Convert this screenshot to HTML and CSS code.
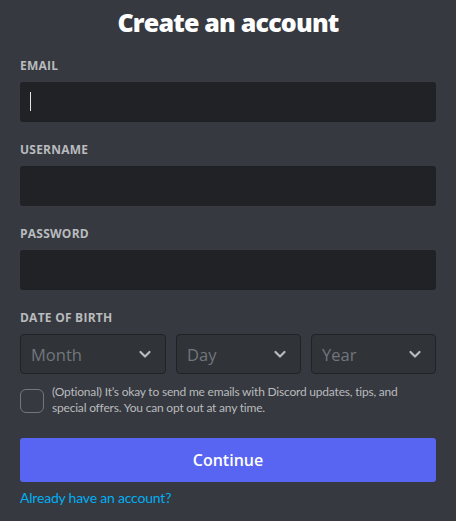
FILE: index.html
```html
<!DOCTYPE html>
<html lang="en">
<head>
<meta charset="utf-8">
<title>Create an account</title>
<link rel="stylesheet" href="styles.css">
</head>
<body>
<main class="auth">
  <h1 class="title">Create an account</h1>
  <form class="form">
    <div class="field">
      <label class="label" for="email">Email</label>
      <div class="input-wrap">
        <input class="input" id="email" type="email">
        <span class="caret"></span>
      </div>
    </div>
    <div class="field">
      <label class="label" for="username">Username</label>
      <div class="input-wrap"><input class="input" id="username" type="text"></div>
    </div>
    <div class="field">
      <label class="label" for="password">Password</label>
      <div class="input-wrap"><input class="input" id="password" type="password"></div>
    </div>
    <div class="field">
      <div class="label">Date of Birth</div>
      <div class="dob">
        <div class="select select-month"><span class="placeholder">Month</span>
          <svg class="chev" width="24" height="24" viewBox="0 0 24 24"><path d="M7.5 10 L12 14.5 L16.5 10" fill="none" stroke="currentColor" stroke-width="2.2" stroke-linecap="round" stroke-linejoin="round"/></svg>
        </div>
        <div class="select select-day"><span class="placeholder">Day</span>
          <svg class="chev" width="24" height="24" viewBox="0 0 24 24"><path d="M7.5 10 L12 14.5 L16.5 10" fill="none" stroke="currentColor" stroke-width="2.2" stroke-linecap="round" stroke-linejoin="round"/></svg>
        </div>
        <div class="select select-year"><span class="placeholder">Year</span>
          <svg class="chev" width="24" height="24" viewBox="0 0 24 24"><path d="M7.5 10 L12 14.5 L16.5 10" fill="none" stroke="currentColor" stroke-width="2.2" stroke-linecap="round" stroke-linejoin="round"/></svg>
        </div>
      </div>
    </div>
    <div class="check-row">
      <span class="checkbox"></span>
      <p class="check-text">(Optional) It’s okay to send me emails with Discord updates, tips, and special offers. You can opt out at any time.</p>
    </div>
    <button type="button" class="btn">Continue</button>
    <a class="link" href="#">Already have an account?</a>
  </form>
</main>
</body>
</html>
```
FILE: styles.css
```css
* { box-sizing: border-box; }
html, body {
  margin: 0;
  padding: 0;
  background: #36393f;
}
body {
  font-family: "Open Sans", "Noto Sans", sans-serif;
  color: #dcddde;
  width: 456px;
  height: 521px;
  overflow: hidden;
}
.auth {
  padding: 5px 20px 0;
}
.title {
  margin: 0 0 19px;
  font-size: 25px;
  line-height: 34px;
  font-weight: 800;
  color: #ffffff;
  text-align: center;
  letter-spacing: -0.8px;
}
.form {
  display: flex;
  flex-direction: column;
}
.field {
  margin-bottom: 20px;
}
.label {
  display: block;
  font-size: 12px;
  line-height: 16px;
  font-weight: 700;
  text-transform: uppercase;
  color: #b9bbbe;
  letter-spacing: 0.02em;
  margin-bottom: 8px;
}
.input-wrap {
  position: relative;
}
.input {
  display: block;
  width: 100%;
  height: 40px;
  border: none;
  border-radius: 3px;
  background: #202225;
  padding: 10px;
  font: inherit;
  color: #dcddde;
  outline: none;
}
.caret {
  position: absolute;
  left: 10px;
  top: 10px;
  width: 1px;
  height: 19px;
  background: #e3e5e8;
}
.dob {
  display: flex;
  gap: 10px;
}
.select {
  height: 40px;
  border: 1px solid #202225;
  border-radius: 4px;
  background: #303338;
  display: flex;
  align-items: center;
  justify-content: space-between;
  padding: 0 8px 0 10px;
}
.select-month { width: 146px; }
.select-day { width: 125px; }
.select-year { width: 125px; }
.placeholder {
  font-size: 16.5px;
  color: #72767d;
}
.chev {
  color: #b9bbbe;
  display: block;
}
.check-row {
  display: flex;
  gap: 8px;
  margin-top: -10px;
  margin-bottom: 22px;
}
.checkbox {
  flex: 0 0 24px;
  width: 24px;
  height: 24px;
  border: 1px solid #72767d;
  border-radius: 6px;
  margin-top: 5px;
}
.check-text {
  margin: 0;
  padding-right: 24px;
  font-family: Lato, "Open Sans", sans-serif;
  font-size: 12px;
  line-height: 16px;
  letter-spacing: -0.2px;
  color: #b9bbbe;
}
.btn {
  height: 44px;
  border: none;
  border-radius: 3px;
  background: #5865f2;
  color: #ffffff;
  font: inherit;
  font-size: 16px;
  font-weight: 600;
  cursor: pointer;
}
.link {
  margin-top: 8px;
  align-self: flex-start;
  font-family: Lato, "Open Sans", sans-serif;
  font-size: 14px;
  line-height: 16px;
  letter-spacing: -0.2px;
  color: #00aff4;
  text-decoration: none;
}
```
